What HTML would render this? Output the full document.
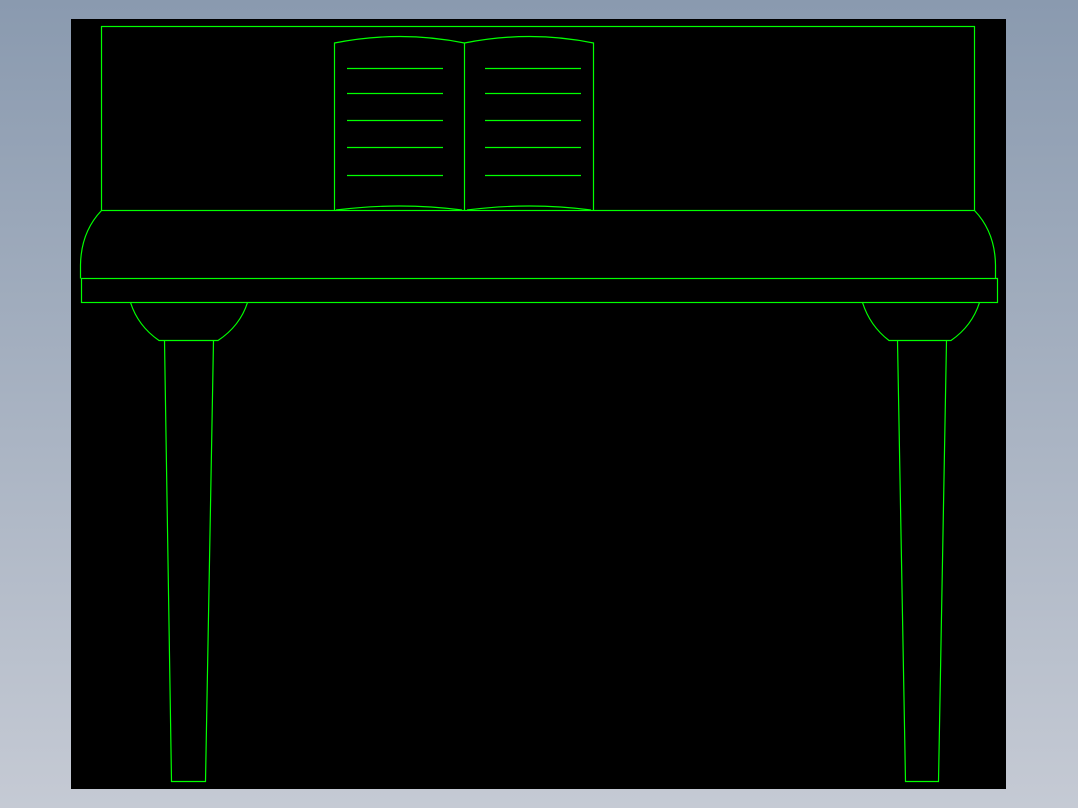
<!DOCTYPE html>
<html><head><meta charset="utf-8"><style>
html,body{margin:0;padding:0;width:1078px;height:808px;overflow:hidden;background:linear-gradient(#8a9aaf,#c5cad4);}
svg{position:absolute;left:0;top:0}
</style></head><body>
<svg width="1078" height="808" viewBox="0 0 1078 808">
<rect x="71" y="19" width="935" height="770" fill="#000"/>
<g fill="none" stroke="#00ff00" stroke-width="1.2">
<rect x="101.5" y="26.5" width="873" height="184"/>
<path d="M334.5 210 V43 Q400 30 464.5 43 Q530 30 593.5 43 V210"/>
<path d="M464.5 43 V210"/>
<path d="M336 210 Q400 202 462 210 M467 210 Q530 202 591 210"/>
<path d="M347 68.5H443M347 93.5H443M347 120.5H443M347 147.5H443M347 175.5H443"/>
<path d="M485 68.5H581M485 93.5H581M485 120.5H581M485 147.5H581M485 175.5H581"/>
<path d="M101.5 210.5 Q81 232 80.5 265 V278.5"/>
<path d="M974.5 210.5 Q995 232 995.5 265 V278.5"/>
<rect x="81.5" y="278.5" width="916" height="24"/>
<path d="M130.5 302.5 Q138 326 159 340.5 H218 Q240 326 247.5 302.5"/>
<path d="M862.5 302.5 Q870 326 889 340.5 H951 Q972 326 979.5 302.5"/>
<path d="M164.5 340.5 L171.5 781.5 H205.5 L213.5 340.5"/>
<path d="M897.5 340.5 L905.5 781.5 H938.5 L946.5 340.5"/>
</g>
</svg>
</body></html>
